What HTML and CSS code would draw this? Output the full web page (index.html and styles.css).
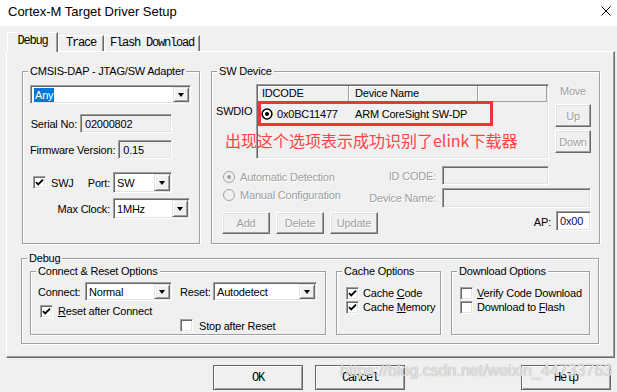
FILE: index.html
```html
<!DOCTYPE html>
<html lang="en">
<head>
	<meta charset="UTF-8">
	<title>Cortex-M Target Driver Setup</title>
	<link rel="stylesheet" href="styles.css">
</head>
<body>
	<div class="window">

		<div class="titlebar">
			<span class="title">Cortex-M Target Driver Setup</span>
			<svg class="close" width="10" height="10" viewBox="0 0 10 10"><path d="M0.5 0.5L9.5 9.5M9.5 0.5L0.5 9.5" stroke="#000" stroke-width="1" fill="none"/></svg>
		</div>

		<div class="tabs">
			<div class="tab tab-debug active">Debug</div>
			<div class="tab tab-trace">Trace</div>
			<div class="tab tab-flash">Flash Download</div>
		</div>

		<div class="panel">
			<div class="top-row">

				<div class="group adapter">
					<span class="legend">CMSIS-DAP - JTAG/SW Adapter</span>
					<div class="combo combo-any">
						<span class="combo-text"><span class="selected">Any</span></span>
						<span class="combo-btn"></span>
					</div>
					<div class="row serial-row">
						<span class="label">Serial No:</span>
						<div class="field serial">02000802</div>
					</div>
					<div class="row fw-row">
						<span class="label">Firmware Version:</span>
						<div class="field fw">0.15</div>
					</div>
					<div class="row swj-row">
						<span class="check"><svg width="9" height="9" viewBox="0 0 9 9"><path d="M1 4.2l2.2 2.2L8 1.6" stroke="#000" stroke-width="1.8" fill="none"/></svg></span>
						<span class="swj-label">SWJ</span>
						<span class="port-label">Port:</span>
						<div class="combo combo-port">
							<span class="combo-text">SW</span>
							<span class="combo-btn"></span>
						</div>
					</div>
					<div class="row clock-row">
						<span class="label">Max Clock:</span>
						<div class="combo combo-clock">
							<span class="combo-text">1MHz</span>
							<span class="combo-btn"></span>
						</div>
					</div>
				</div>

				<div class="group device">
					<span class="legend">SW Device</span>
					<div class="device-top">
						<span class="swdio">SWDIO</span>
						<div class="chain">
							<div class="chain-head">
								<span class="col-id">IDCODE</span>
								<span class="col-name">Device Name</span>
								<span class="col-rest"></span>
							</div>
							<div class="chain-row">
								<span class="col-id">
									<svg width="12" height="12" viewBox="0 0 12 12"><circle cx="6" cy="6" r="4.9" fill="#fff" stroke="#000" stroke-width="1.5"/><circle cx="6" cy="6" r="2.1" fill="#000"/></svg>
									<span class="idcode">0x0BC11477</span>
								</span>
								<span class="col-name">ARM CoreSight SW-DP</span>
							</div>
							<div class="mark"></div>
						</div>
						<div class="move">
							<span class="move-label">Move</span>
							<div class="btn disabled move-btn">Up</div>
							<div class="btn disabled move-btn down">Down</div>
						</div>
					</div>

					<div class="device-mid">
						<div class="radios">
							<div class="radio-row">
								<svg width="12" height="12" viewBox="0 0 12 12"><circle cx="6" cy="6" r="5.5" fill="#f0f0f0" stroke="#a0a0a0"/><circle cx="6" cy="6" r="2" fill="#a0a0a0"/></svg>
								<span>Automatic Detection</span>
							</div>
							<div class="radio-row">
								<svg width="12" height="12" viewBox="0 0 12 12"><circle cx="6" cy="6" r="5.5" fill="#f0f0f0" stroke="#a0a0a0"/></svg>
								<span>Manual Configuration</span>
							</div>
						</div>
						<div class="fields">
							<div class="field-row id-row">
								<span class="label">ID CODE:</span>
								<div class="field id-field"></div>
							</div>
							<div class="field-row name-row">
								<span class="label">Device Name:</span>
								<div class="field name-field"></div>
							</div>
						</div>
					</div>

					<div class="device-bottom">
						<div class="btn disabled small">Add</div>
						<div class="btn disabled small">Delete</div>
						<div class="btn disabled small">Update</div>
						<span class="ap-label">AP:</span>
						<div class="field white ap-field">0x00</div>
					</div>

					<p class="note">出现这个选项表示成功识别了elink下载器</p>
				</div>
			</div>

			<div class="group debug">
				<span class="legend">Debug</span>
				<div class="debug-row">

					<div class="group connect">
						<span class="legend">Connect &amp; Reset Options</span>
						<div class="connect-row">
							<span class="connect-label">Connect:</span>
							<div class="combo combo-connect">
								<span class="combo-text">Normal</span>
								<span class="combo-btn"></span>
							</div>
							<span class="reset-label">Reset:</span>
							<div class="combo combo-reset">
								<span class="combo-text">Autodetect</span>
								<span class="combo-btn"></span>
							</div>
						</div>
						<div class="check-row after-connect">
							<span class="check"><svg width="9" height="9" viewBox="0 0 9 9"><path d="M1 4.2l2.2 2.2L8 1.6" stroke="#000" stroke-width="1.8" fill="none"/></svg></span>
							<span><u>R</u>eset after Connect</span>
						</div>
						<div class="check-row after-reset">
							<span class="check"></span>
							<span>Stop after Reset</span>
						</div>
					</div>

					<div class="group cache">
						<span class="legend">Cache Options</span>
						<div class="check-row first">
							<span class="check"><svg width="9" height="9" viewBox="0 0 9 9"><path d="M1 4.2l2.2 2.2L8 1.6" stroke="#000" stroke-width="1.8" fill="none"/></svg></span>
							<span>Cache <u>C</u>ode</span>
						</div>
						<div class="check-row">
							<span class="check"><svg width="9" height="9" viewBox="0 0 9 9"><path d="M1 4.2l2.2 2.2L8 1.6" stroke="#000" stroke-width="1.8" fill="none"/></svg></span>
							<span>Cache <u>M</u>emory</span>
						</div>
					</div>

					<div class="group download">
						<span class="legend">Download Options</span>
						<div class="check-row first">
							<span class="check"></span>
							<span><u>V</u>erify Code Download</span>
						</div>
						<div class="check-row">
							<span class="check"></span>
							<span>Download to <u>F</u>lash</span>
						</div>
					</div>

				</div>
			</div>
		</div>

		<div class="buttons">
			<div class="dlg-btn">OK</div>
			<div class="dlg-btn cancel">Cancel</div>
			<div class="dlg-btn help">Help</div>
		</div>

		<span class="watermark">https://blog.csdn.net/weixin_44733763</span>
	</div>
</body>
</html>
```

FILE: styles.css
```css
* {
	box-sizing: border-box;
}

body {
	margin: 0;
	background: #f0f0f0;
	font-family: "Liberation Sans", Arial, sans-serif;
	font-size: 11px;
	letter-spacing: -0.2px;
	color: #000;
}

.window {
	position: relative;
	width: 617px;
	height: 392px;
	overflow: hidden;
}

/* title bar */
.titlebar {
	display: flex;
	align-items: center;
	height: 26px;
	padding-left: 8px;
	background: #fff;
}

.title {
	font-size: 13px;
	letter-spacing: 0;
	margin-top: -3px;
}

.close {
	margin-left: auto;
	margin-right: 6px;
	margin-top: -5px;
}

/* tabs */
.tabs {
	display: flex;
	align-items: flex-end;
	height: 25px;
	padding-left: 7px;
}

.tab {
	height: 16px;
	border: 1px solid;
	border-bottom: 0;
	border-color: #fff #696969 #696969 #fff;
	box-shadow: inset -1px 0 0 #a0a0a0;
	font-family: "Liberation Mono", monospace;
	font-size: 12px;
	letter-spacing: -1.2px;
	line-height: 15px;
	text-align: center;
}

.tab-debug {
	width: 51px;
}

.tab-trace {
	width: 46px;
}

.tab-flash {
	width: 96px;
}

.tab.active {
	position: relative;
	height: 20px;
	margin-bottom: -1px;
	background: #f0f0f0;
	line-height: 17px;
}

/* tab page */
.panel {
	width: 609px;
	height: 307px;
	margin-left: 6px;
	padding: 19px 0 0 15px;
	border: 1px solid;
	border-color: #fff #696969 #696969 #fff;
	box-shadow: inset -1px -1px 0 #a0a0a0;
}

.top-row {
	display: flex;
}

.group {
	position: relative;
	border: 1px solid #a0a0a0;
	box-shadow: inset 1px 1px 0 #fff, 1px 1px 0 #fff;
}

.legend {
	position: absolute;
	top: -8px;
	left: 5px;
	padding: 0 2px;
	background: #f0f0f0;
	line-height: 14px;
	white-space: nowrap;
}

/* sunken fields */
.field {
	display: flex;
	align-items: center;
	height: 19px;
	padding: 0 4px;
	border: 1px solid;
	border-color: #a0a0a0 #fff #fff #a0a0a0;
	box-shadow: inset 1px 1px 0 #696969, inset -1px -1px 0 #e3e3e3;
	background: #f0f0f0;
}

.field.white {
	background: #fff;
}

.combo {
	display: flex;
	height: 19px;
	padding: 1px;
	border: 1px solid;
	border-color: #a0a0a0 #fff #fff #a0a0a0;
	box-shadow: inset 1px 1px 0 #696969, inset -1px -1px 0 #e3e3e3;
	background: #fff;
}

.combo-text {
	flex: 1;
	display: flex;
	align-items: center;
	padding-left: 2px;
}

.selected {
	background: #0078d7;
	color: #fff;
	padding: 1px 1px;
}

.combo-btn {
	display: flex;
	align-items: center;
	justify-content: center;
	width: 16px;
	border: 1px solid;
	border-color: #e3e3e3 #696969 #696969 #e3e3e3;
	box-shadow: inset 1px 1px 0 #fff, inset -1px -1px 0 #a0a0a0;
	background: #f0f0f0;
}

.combo-btn::after {
	content: "";
	border-top: 4px solid #000;
	border-left: 3.5px solid transparent;
	border-right: 3.5px solid transparent;
}

.check {
	display: flex;
	align-items: center;
	justify-content: center;
	flex: none;
	width: 13px;
	height: 13px;
	border: 1px solid;
	border-color: #a0a0a0 #fff #fff #a0a0a0;
	box-shadow: inset 1px 1px 0 #696969, inset -1px -1px 0 #e3e3e3;
	background: #fff;
}

.btn {
	display: flex;
	align-items: center;
	justify-content: center;
	border: 1px solid;
	border-color: #fff #696969 #696969 #fff;
	box-shadow: inset -1px -1px 0 #a0a0a0, inset 1px 1px 0 #e3e3e3;
	background: #f0f0f0;
}

.disabled,
.btn.disabled {
	color: #a0a0a0;
	text-shadow: 1px 1px 0 #fff;
}

/* adapter group */
.adapter {
	width: 178px;
	height: 173px;
}

.combo-any {
	width: 161px;
	margin: 13px 0 0 7px;
}

.row {
	display: flex;
	align-items: center;
	justify-content: flex-end;
	margin-left: 7px;
}

.row .label {
	margin-right: 3px;
	white-space: nowrap;
}

.serial-row {
	width: 142px;
	margin-top: 10px;
}

.serial {
	width: 92px;
}

.fw-row {
	width: 142px;
	margin-top: 7px;
}

.fw {
	width: 59px;
}

.swj-row {
	width: 142px;
	height: 21px;
	margin-top: 13px;
	justify-content: flex-start;
}

.swj-row .check {
	margin-left: 3px;
}

.swj-label {
	margin-left: 5px;
}

.port-label {
	margin-left: auto;
	margin-right: 3px;
}

.combo-port {
	width: 59px;
	height: 21px;
}

.clock-row {
	width: 160px;
	margin-top: 5px;
}

.combo-clock {
	width: 77px;
	height: 21px;
}

/* sw device group */
.device {
	width: 389px;
	height: 173px;
	margin-left: 11px;
}

.device-top {
	display: flex;
	margin-top: 12px;
	padding-left: 4px;
}

.swdio {
	width: 40px;
	margin-top: 20px;
	line-height: 14px;
}

.chain {
	position: relative;
	width: 293px;
	height: 75px;
	padding: 1px;
	border: 1px solid;
	border-color: #a0a0a0 #fff #fff #a0a0a0;
	box-shadow: inset 1px 1px 0 #696969, inset -1px -1px 0 #e3e3e3;
}

.chain-head {
	display: flex;
	height: 16px;
}

.chain-head span {
	height: 16px;
	line-height: 15px;
	border-right: 1px solid #a0a0a0;
	border-bottom: 1px solid #a0a0a0;
	box-shadow: inset 1px 1px 0 #fff;
}

.col-id {
	width: 91px;
	padding-left: 4px;
}

.col-name {
	width: 129px;
	padding-left: 6px;
}

.col-rest {
	flex: 1;
}

.chain-row {
	display: flex;
	align-items: center;
	height: 23px;
}

.chain-row .col-id {
	display: flex;
	align-items: center;
	padding-left: 3px;
}

.idcode {
	margin-left: 4px;
}

.mark {
	position: absolute;
	left: 1px;
	top: 16px;
	width: 235px;
	height: 25px;
	border: 3px solid #ee3535;
}

.note {
	position: absolute;
	left: 13px;
	top: 58px;
	margin: 0;
	font-family: "Noto Sans CJK SC", sans-serif;
	font-size: 16px;
	line-height: 20px;
	letter-spacing: 0;
	color: #ff4444;
	white-space: nowrap;
}

.move {
	display: flex;
	flex-direction: column;
	width: 36px;
	margin-left: 6px;
}

.move-label {
	line-height: 14px;
	text-align: center;
	color: #a0a0a0;
	text-shadow: 1px 1px 0 #fff;
}

.move-btn {
	height: 23px;
	margin-top: 6px;
}

.move-btn.down {
	margin-top: 3px;
}

.device-mid {
	display: flex;
	height: 49px;
	padding-right: 8px;
}

.radios {
	padding: 9px 0 0 11px;
	color: #a0a0a0;
	text-shadow: 1px 1px 0 #fff;
}

.radio-row {
	display: flex;
	align-items: center;
	height: 18px;
}

.radio-row svg {
	margin-right: 5px;
}

.fields {
	margin-left: auto;
	padding-top: 7px;
}

.field-row {
	display: flex;
	align-items: center;
	justify-content: flex-end;
}

.field-row .label {
	margin-right: 6px;
	color: #a0a0a0;
	text-shadow: 1px 1px 0 #fff;
}

.id-row {
	margin-right: 42px;
}

.id-field {
	width: 107px;
}

.name-row {
	margin-top: 3px;
}

.name-field {
	width: 149px;
	height: 20px;
}

.device-bottom {
	display: flex;
	align-items: flex-start;
	margin-top: 4px;
	padding: 0 8px 0 10px;
}

.btn.small {
	width: 48px;
	height: 22px;
	margin-right: 6px;
}

.ap-label {
	margin: 4px 5px 0 auto;
}

.ap-field {
	width: 35px;
	height: 20px;
	margin-top: -1px;
	padding: 0 3px;
	color: #0a0a60;
}

/* debug group */
.debug {
	width: 578px;
	height: 86px;
	margin: 14px 0 0 -1px;
}

.debug-row {
	display: flex;
	margin-top: 12px;
	padding-left: 8px;
}

.connect {
	width: 296px;
	height: 64px;
}

.connect-row {
	display: flex;
	align-items: center;
	margin-top: 10px;
	padding-left: 7px;
}

.connect-label {
	width: 47px;
}

.combo-connect {
	width: 87px;
}

.reset-label {
	width: 33px;
	margin-left: 8px;
}

.combo-reset {
	width: 104px;
}

.check-row {
	display: flex;
	align-items: center;
	height: 14px;
}

.check-row .check {
	margin-right: 4px;
}

.after-connect {
	margin-top: 3px;
	padding-left: 9px;
}

.after-connect .check {
	margin-right: 5px;
}

.after-reset {
	height: 15px;
	padding-left: 149px;
}

.after-reset .check {
	margin-right: 6px;
}

.cache {
	width: 105px;
	height: 64px;
	margin-left: 10px;
	padding-left: 9px;
}

.download {
	width: 139px;
	height: 64px;
	margin-left: 10px;
	padding-left: 8px;
}

.check-row.first {
	margin-top: 14px;
}

/* dialog buttons */
.buttons {
	display: flex;
	margin-top: 7px;
	padding-left: 213px;
}

.dlg-btn {
	display: flex;
	align-items: center;
	justify-content: center;
	width: 90px;
	height: 25px;
	border: 1px solid #646464;
	box-shadow: inset 1px 1px 0 #fff, inset -1px -1px 0 #a0a0a0;
	font-family: "Liberation Mono", monospace;
	font-size: 12px;
	letter-spacing: -1.2px;
}

.dlg-btn.cancel {
	margin-left: 12px;
}

.dlg-btn.help {
	margin-left: auto;
	margin-right: 6px;
}

.watermark {
	position: absolute;
	left: 340px;
	top: 362px;
	font-size: 16px;
	letter-spacing: 0;
	color: rgba(250, 250, 250, 0.75);
	text-shadow: 0 0 1px #8a8a8a;
	white-space: nowrap;
}
```
